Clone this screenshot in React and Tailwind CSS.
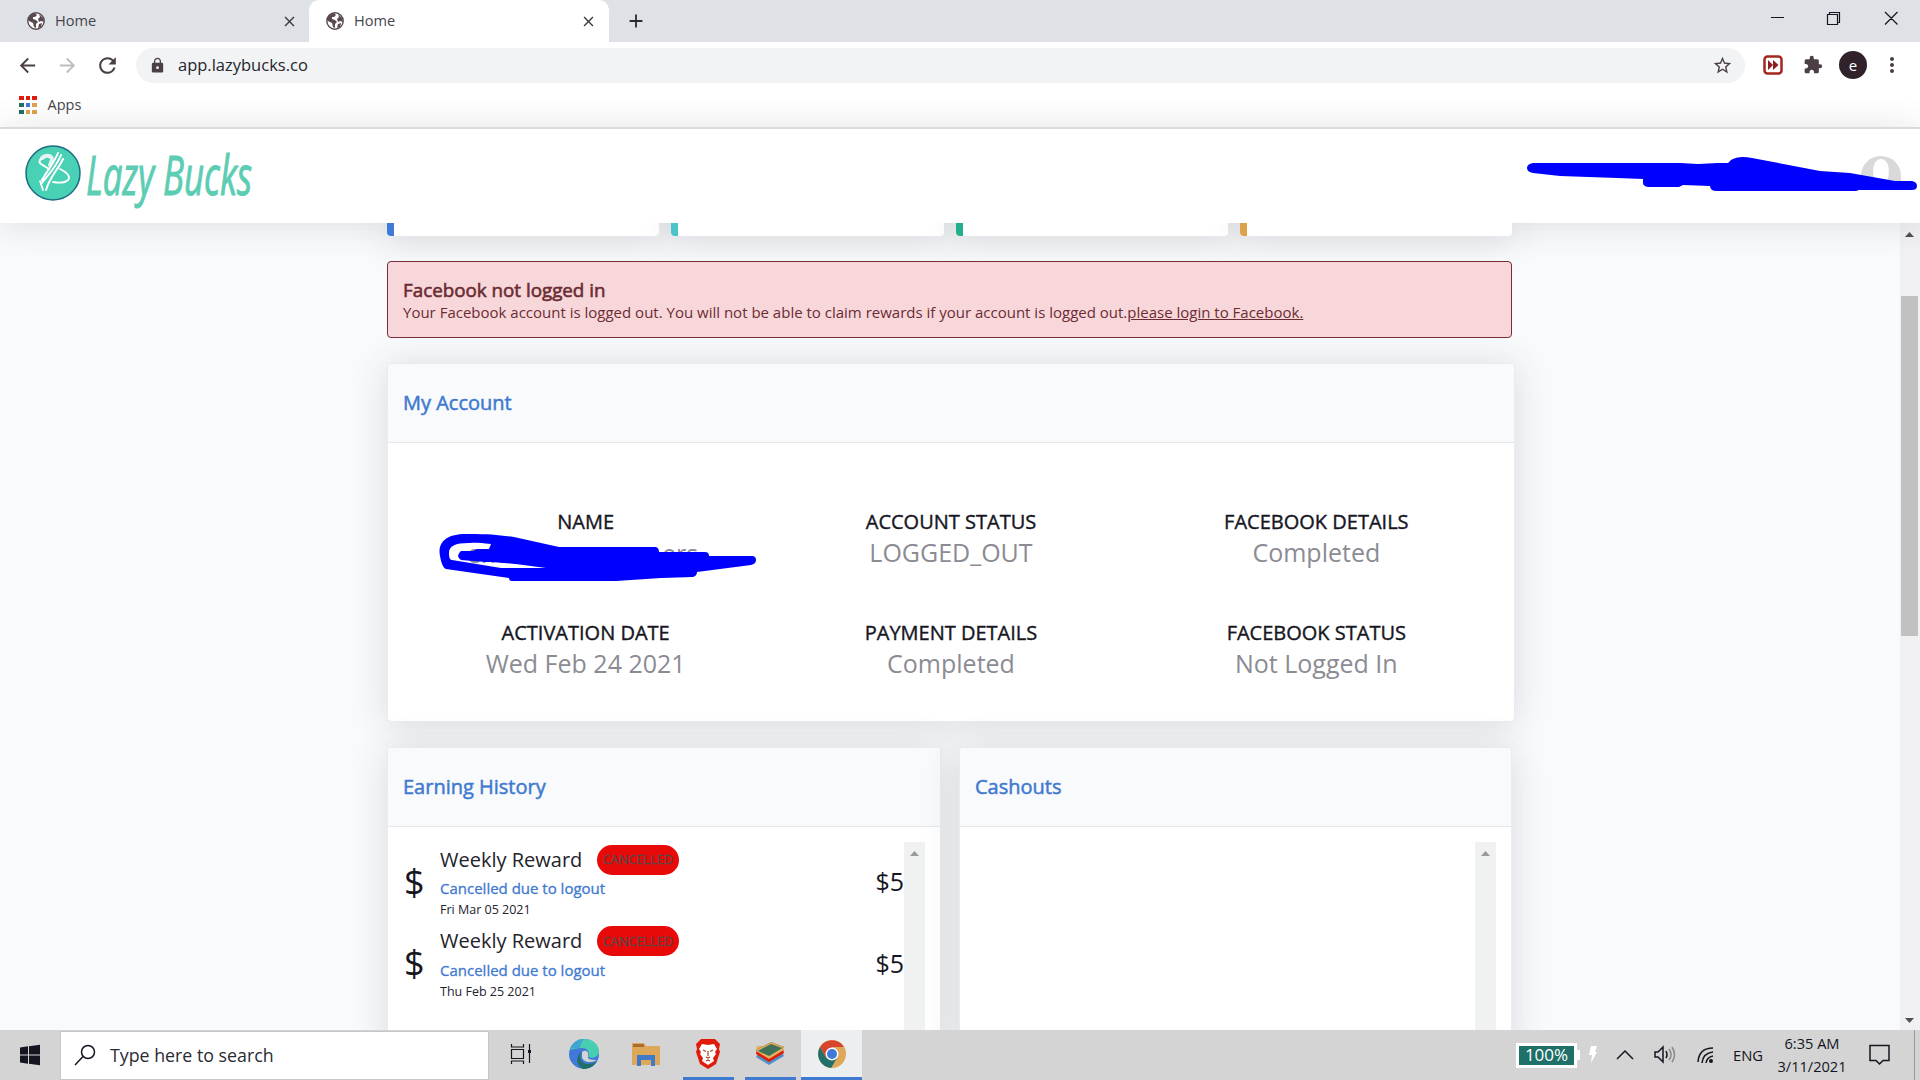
import React from 'react';
import { MdPublic, MdArrowBack, MdArrowForward, MdRefresh, MdLock, MdStarBorder, MdExtension, MdMoreVert, MdClose, MdAdd } from 'react-icons/md';

const stats = ['bg-[#4079d8]', 'bg-[#4ac4c8]', 'bg-[#25ae8c]', 'bg-[#dda24c]'];

const details = [
    { label: 'NAME', value: '' },
    { label: 'ACCOUNT STATUS', value: 'LOGGED_OUT' },
    { label: 'FACEBOOK DETAILS', value: 'Completed' },
    { label: 'ACTIVATION DATE', value: 'Wed Feb 24 2021' },
    { label: 'PAYMENT DETAILS', value: 'Completed' },
    { label: 'FACEBOOK STATUS', value: 'Not Logged In' }
];

const rewards = [
    { title: 'Weekly Reward', note: 'Cancelled due to logout', date: 'Fri Mar 05 2021', amount: '$5' },
    { title: 'Weekly Reward', note: 'Cancelled due to logout', date: 'Thu Feb 25 2021', amount: '$5' }
];

const appsColors = [
    'bg-[#e01b0c]', 'bg-[#e01b0c]', 'bg-[#e01b0c]',
    'bg-[#1e7068]', 'bg-[#4079d8]', 'bg-[#dda24c]',
    'bg-[#1e7068]', 'bg-[#dda24c]', 'bg-[#dda24c]'
];

const Globe = () => (
    <span className="w-[21px] h-[21px] flex items-center justify-center">
        <svg width="18" height="18" viewBox="0 0 18 18">
            <circle cx="9" cy="9" r="8.200" fill="#fff" stroke="#5a4a50" strokeWidth="1.400" />
            <path d="M1 8c0-4 3-7 7-7l2 2-2 2H6v2l3 1 2 2-2 2v4l-2-1-1-4-4-2zM12 2l4 4 1 4-3-1-2 1-1-3 2-2z" fill="#5a4a50" />
            <path d="M12 12l3-1-1 4-3 1z" fill="#5a4a50" />
        </svg>
    </span>
);

const Tab = ({ active }) => (
    <div className={`h-[42px] flex items-center ${active ? 'w-[300px] pl-[15px] pr-[12px] bg-white rounded-t-[10px]' : 'w-[309px] pl-[25px] pr-[11px]'}`}>
        <Globe />
        <span className="ml-[9px] text-[14.6px] text-[#45454d]">Home</span>
        <MdClose size={17} className="ml-auto text-[#3c3c40]" />
    </div>
);

const WindowControls = () => (
    <svg width="160" height="42" viewBox="0 0 160 42" fill="none" stroke="#15151f" strokeWidth="1.2" className="ml-auto">
        <path d="M11 17.500h13M67.500 14.500h10v10h-10zM69.500 14.500v-2h10v10h-2M125 12l12.500 12.500M137.500 12l-12.500 12.500" />
    </svg>
);

const Browser = () => (
    <>
        <div className="h-[42px] bg-[#dee1e6] flex shrink-0">
            <Tab />
            <Tab active />
            <MdAdd size={22} className="ml-4 mt-[10px] text-[#2c2c30]" />
            <WindowControls />
        </div>
        <div className="h-[46px] bg-white flex items-center shrink-0 text-[#4a3f45]">
            <MdArrowBack size={23} className="ml-4" />
            <MdArrowForward size={23} className="ml-[17px] text-[#bdbdbd]" />
            <MdRefresh size={25} className="ml-4" />
            <div className="ml-[16px] w-[1609px] h-[35px] rounded-full bg-[#f1f3f4] flex items-center pl-[13px] pr-[12px]">
                <MdLock size={17} />
                <span className="ml-[12px] text-[16.5px] text-[#26262c]">app.lazybucks.co</span>
                <MdStarBorder size={21} className="ml-auto" />
            </div>
            <svg width="20" height="20" viewBox="0 0 20 20" className="ml-[18px]">
                <rect x="1.500" y="1.500" width="17" height="17" rx="3" fill="#fff" stroke="#a3271f" strokeWidth="2.500" />
                <path d="M5 5l5 5-5 5zM10 5l5.500 5-5.500 5z" fill="#8c1f26" />
            </svg>
            <MdExtension size={20} className="ml-[20px]" />
            <div className="ml-[16px] w-7 h-7 rounded-full bg-[#31212b] text-white text-[15px] flex items-center justify-center">e</div>
            <MdMoreVert size={24} className="ml-[13px]" />
        </div>
        <div className="h-[39px] bg-white flex items-center shrink-0 pl-[19px] pb-[5px]">
            <div className="grid grid-cols-3 gap-x-[2px] gap-y-[2.500px]">
                {appsColors.map((color, i) => (
                    <span key={i} className={`w-[4.5px] h-[4.5px] ${color}`} />
                ))}
            </div>
            <span className="ml-[11px] text-[14.5px] text-[#45454d]">Apps</span>
        </div>
    </>
);

const Logo = () => (
    <svg width="270" height="82" viewBox="0 0 270 82" className="overflow-visible">
        <circle cx="43" cy="37" r="27" fill="#48d1b5" stroke="#1e6c80" strokeWidth="1.500" />
        <g fill="none" stroke="#fff" strokeLinecap="round">
            <path d="M34 22c-4 0-6 4-3 6l8 5" strokeWidth="2" />
            <path d="M32 22c4-4 11-2 10 2l-2 5" strokeWidth="4" stroke="#e6f3f4" />
            <path d="M48 17c-4 10-9 15-16 27M51 19C47 30 39 38 31 48M53 23c-5 11-13 17-17 31" strokeWidth="2" />
            <path d="M50 33c7 3 11 8 8 11-3 3-9 3-15 2M30 45l3 9" strokeWidth="1.800" />
        </g>
        <text x="76" y="59" fontSize="54" fontStyle="italic" fontFamily="Open Sans, sans-serif" fill="#5ccdb3" stroke="#5ccdb3" strokeWidth="1" textLength="166" lengthAdjust="spacingAndGlyphs">Lazy Bucks</text>
    </svg>
);

const Header = () => (
    <header className="h-[96px] bg-white border-t-2 border-[#d8dbdd] flex shrink-0 justify-between relative z-10 shadow-[0_2px_34px_rgba(58,59,69,0.15)]">
        <div className="pl-[10px] pt-[7px]"><Logo /></div>
        <svg width="400" height="94" viewBox="1520 129 400 94">
            <path d="M1861 176a20 20 0 0 1 40 0v6h-40z" fill="#d9d9d9" />
            <path d="M1875 182c-3-10-3-22 6-23 9 1 9 13 6 23z" fill="#fff" />
            <path d="M1533 163h147l18 1 20-1h10l3-3q8-5 21-2l68 13 30 2 45 8h17q5 1 5 5t-5 4h-53l-3 1h-139q-7 0-7-5l-27-1-4 2h-31q-5-1-5-4v-4l-26-1-57-2-27-3q-6-1-6-5t6-5z" fill="#0000ff" />
        </svg>
    </header>
);

const Card = ({ title, className, children }) => (
    <section className={`bg-white rounded border border-[#e9ecef] shadow-[0_2px_36px_rgba(58,59,69,0.16)] flex flex-col ${className}`}>
        <div className="h-[79px] shrink-0 bg-[#f8fafc] border-b border-[#e3e6ea] rounded-t pl-[15px] flex items-center">
            <h6 className="text-[20px] text-[#4079d0] [-webkit-text-stroke:0.5px]">{title}</h6>
        </div>
        {children}
    </section>
);

const InnerScroll = () => (
    <div className="w-[21px] bg-[#f0f1f1] flex justify-center pt-[9px]">
        <svg width="9" height="5" viewBox="0 0 9 5"><path d="M0 5L4.500 0 9 5z" fill="#9a9a9a" /></svg>
    </div>
);

const RedactedName = () => (
    <svg width="320" height="56" viewBox="438 528 320 56" className="absolute left-[34px] top-[24px]">
        <text x="468" y="563" fontSize="25" fill="#8b8b93" fontFamily="Open Sans, sans-serif">em</text>
        <text x="663" y="563" fontSize="25" fill="#8b8b93" fontFamily="Open Sans, sans-serif">ers</text>
        <path fillRule="evenodd" fill="#0000ff" d="M441 556c-3-15 8-23 29-22 20 0 30 1 45 3l45 10h97q3 1 3 5h46q4 0 4 4h43q4 0 4 4t-5 5l-54 7q0 4-4 5l-32 1-45 3h-104q-3 0-3-3l-28-4-35-5q-4-1-6-13zM450 553c0 5 1 7 3 7l49 8h45c-20-2-40-6-61-6l-24-2q-6-4 0-9h12l4-2h12l2-5c-15-2-22-1-22-1-14 0-20 3-20 10z" />
    </svg>
);

const Account = () => (
    <Card title="My Account" className="mt-[25px] h-[359px] w-[1128px]">
        <div className="grid grid-cols-3 mt-[61px] px-[15px] gap-y-[42px]">
            {details.map((d) => (
                <div key={d.label} className="h-[69px] text-center relative">
                    <div className="text-[20px] leading-[36px] text-[#17171f] [-webkit-text-stroke:0.4px]">{d.label}</div>
                    <div className="text-[25px] leading-[24px] text-[#8b8b93]">{d.value}</div>
                    {!d.value && <RedactedName />}
                </div>
            ))}
        </div>
    </Card>
);

const RewardRow = ({ item }) => (
    <div className="h-[81.5px] flex items-center">
        <span className="w-[37px] pl-px text-[36px] leading-none text-[#17171f]">$</span>
        <div>
            <div className="flex items-center h-[31px]">
                <span className="w-[157px] text-[20px] text-[#23232b]">{item.title}</span>
                <span className="w-[82px] h-[30px] rounded-full bg-[#e80909] text-[#5d4646] text-[12.8px] [-webkit-text-stroke:0.3px] flex items-center justify-center">CANCELLED</span>
            </div>
            <div className="text-[15px] leading-[26px] text-[#4079d0] [-webkit-text-stroke:0.3px]">{item.note}</div>
            <div className="text-[12.5px] leading-[18px] text-[#23232b]">{item.date}</div>
        </div>
        <span className="ml-auto text-[25px] text-[#17171f]">{item.amount}</span>
    </div>
);

const Page = () => (
    <main className="flex-1 min-h-0 overflow-hidden flex bg-[#f8fafc]">
        <div className="flex-1 pl-[387px]">
            <div className="flex gap-[12px] relative z-20">
                {stats.map((accent) => (
                    <div key={accent} className="w-[272.3px] h-[13px] bg-white rounded-b overflow-hidden shadow-[0_2px_34px_rgba(58,59,69,0.25)]">
                        <div className={`w-[7px] h-full ${accent}`} />
                    </div>
                ))}
            </div>
            <div className="mt-[25px] w-[1125px] h-[77px] rounded border border-[#7b2a38] bg-[#f8d7da] text-[#6b2c33] pl-[15px] pt-[16px] relative z-20">
                <div className="text-[18.8px] leading-[24px] [-webkit-text-stroke:0.6px]">Facebook not logged in</div>
                <div className="text-[15px] leading-[21px] whitespace-nowrap">
                    Your Facebook account is logged out. You will not be able to claim rewards if your account is logged out.<a className="underline">please login to Facebook.</a>
                </div>
            </div>
            <Account />
            <div className="mt-[25px] flex gap-[18px]">
                <Card title="Earning History" className="w-[554px] h-[310px]">
                    <div className="flex flex-1 px-[15px] pt-[15px]">
                        <div className="flex-1 -mt-px">
                            {rewards.map((r) => <RewardRow key={r.date} item={r} />)}
                        </div>
                        <InnerScroll />
                    </div>
                </Card>
                <Card title="Cashouts" className="w-[553px] h-[310px]">
                    <div className="flex flex-1 justify-end pr-[15px] pt-[15px]">
                        <InnerScroll />
                    </div>
                </Card>
            </div>
        </div>
        <div className="w-[20px] bg-[#f1f1f3] flex flex-col items-center pt-[9px] pb-[7px] pr-px">
            <svg width="9" height="5" viewBox="0 0 9 5"><path d="M0 5L4.500 0 9 5z" fill="#505050" /></svg>
            <div className="w-[17px] h-[340px] bg-[#c1c1c1] mt-[59px]" />
            <svg width="9" height="5" viewBox="0 0 9 5" className="mt-auto"><path d="M0 0L4.500 5 9 0z" fill="#505050" /></svg>
        </div>
    </main>
);

const TaskItem = ({ className = '', line, children }) => (
    <div className={`h-[50px] flex flex-col items-center ${className}`}>
        <div className="flex-1 flex items-center">{children}</div>
        <div className={`h-[3px] ${line || ''}`} />
    </div>
);

const Taskbar = () => (
    <footer className="h-[50px] shrink-0 bg-[#d4d4d4] flex items-center text-[#15151f] relative z-30">
        <svg width="60" height="50" viewBox="0 0 60 50" fill="#15151f">
            <path d="M20 17.500l8-1.200v8.200h-8zM29 16.200l11-1.500v9.800h-11zM20 25.500h8v8.200l-8-1.200zM29 25.500h11v9.800l-11-1.500z" />
        </svg>
        <div className="w-[429px] h-[49px] bg-white border border-[#c6c6c6] flex items-center pl-[13px]">
            <svg width="22" height="22" viewBox="0 0 22 22" fill="none" stroke="#15151f" strokeWidth="1.500">
                <circle cx="14" cy="8" r="6.500" /><path d="M9 12.500L1 21" />
            </svg>
            <span className="ml-[14px] text-[17.8px] text-[#2b2b33]">Type here to search</span>
        </div>
        <TaskItem className="w-[64px]">
            <svg width="22" height="22" viewBox="0 0 22 22" fill="none" stroke="#15151f" strokeWidth="1.200">
                <path d="M1.500 1v3h12V1M1.500 6.500h12v9h-12zM1.500 21v-3h12v3M19.500 1v19" /><path d="M18 7h3v3h-3z" fill="#15151f" stroke="none" />
            </svg>
        </TaskItem>
        <TaskItem className="w-[62px]">
            <svg width="30" height="30" viewBox="0 0 30 30">
                <circle cx="15" cy="15" r="15" fill="#4079d8" />
                <path d="M1 11C4 3 9 0 16 0c8 0 14 6 14 12 0 6-6 8-11 6 2-4 0-9-6-9-4 0-9 1-12 2z" fill="#48cdb0" />
                <path d="M1 10C4 3 9 0 15 0c-3 4-4 6-4 9-4 0-8 0-10 1z" fill="#3fa6cf" />
                <path d="M13 12c-4 6-1 12 5 13 4 0 8-1 10-3-3 6-9 8-14 8-7-4-8-12-1-18z" fill="#1e7068" />
                <path d="M13 13c4-3 7 0 6 4-1 3 2 4 9 4-5 3-14 3-15-3z" fill="#d4d4d4" />
            </svg>
        </TaskItem>
        <TaskItem className="w-[62px]">
            <svg width="28" height="24" viewBox="0 0 28 24">
                <path d="M0 1h12l2 3h14v19H0z" fill="#dda85a" /><path d="M1 2h11v3H1z" fill="#aa6a30" />
                <path d="M5 13h18v11h-4v-6H9v6H5z" fill="#4079c8" />
            </svg>
        </TaskItem>
        <TaskItem className="w-[62px]" line="w-[51px] bg-[#4079d0]">
            <svg width="26" height="30" viewBox="0 0 26 30">
                <path d="M6 0h14l5 5-1 5 1 3-4 12-8 5-8-5L1 13l1-3-1-5z" fill="#e01b0c" />
                <path d="M7 5l6 1 6-1 3 5-2 3 1 2-3 4 1 3-6 4-6-4 1-3-3-4 1-2-2-3z" fill="#fff" />
                <path d="M8 11l3 1.500M18 11l-3 1.500M13 12v5M11 18l2 1 2-1M11 22l2-1 2 1" fill="none" stroke="#b0402c" strokeWidth="1.200" />
            </svg>
        </TaskItem>
        <TaskItem className="w-[62px]" line="w-[51px] bg-[#4079d0]">
            <svg width="28" height="24" viewBox="0 0 28 24">
                <path d="M0 15l13 8 15-9-2-4-24 2z" fill="#4f91c8" />
                <path d="M0 12l13 8 15-9-1-4H1z" fill="#e01b0c" />
                <path d="M0 9l13 8 15-9-1-4H1z" fill="#ddb060" />
                <path d="M0 8L15 0l13 5-15 9z" fill="#3f7058" /><path d="M0 8L15 0l13 5-2 1-11-4L2 9z" fill="#dda85a" />
            </svg>
        </TaskItem>
        <TaskItem className="w-[61px] bg-[#eceff1]" line="w-[61px] bg-[#4079d0]">
            <svg width="28" height="28" viewBox="0 0 28 28">
                <circle cx="14" cy="14" r="14" fill="#dda85a" />
                <path d="M2 7a14 14 0 0 1 24 0H14L8 18z" fill="#d8452e" />
                <path d="M2 7a14 14 0 0 0 11 21l6-10-11 0z" fill="#1e7068" />
                <circle cx="14" cy="14" r="6.500" fill="#fff" /><circle cx="14" cy="14" r="5" fill="#4079d8" />
            </svg>
        </TaskItem>
        <div className="ml-auto w-[61px] h-[25px] border-[3px] border-white bg-[#1e7068] text-white text-[17px] flex items-center justify-center">100%</div>
        <svg width="30" height="50" viewBox="0 0 30 50" fill="#fff"><path d="M0 20h3v10H0zM14 16h6l-2 6h2l-6 11 1-8h-3z" /></svg>
        <svg width="130" height="50" viewBox="1607 0 130 50" fill="none" stroke="#15151f" strokeWidth="1.500">
            <path d="M1617 29l8-8 8 8M1655 22h3l5-5v15l-5-5h-3zM1666 21q2 4 0 7" />
            <path d="M1669 19q4 6 0 11M1672 17q5 8 0 15" stroke="#8a8a8a" />
            <path d="M1698 32q1-14 15-14M1702 33q1-10 11-11M1706 33q1-6 7-7" /><circle cx="1711" cy="31" r="2" fill="#15151f" stroke="none" />
        </svg>
        <span className="w-[28px] -ml-[4px] text-[14.8px]">ENG</span>
        <div className="w-[82px] ml-[10px] pb-px text-[14.6px] leading-[23px] text-center">
            <div>6:35 AM</div>
            <div>3/11/2021</div>
        </div>
        <svg width="67" height="50" viewBox="1853 0 67 50" fill="none" stroke="#15151f" strokeWidth="1.500">
            <path d="M1870 15.500h19v15h-6l-3.500 3.500-3.500-3.500h-6z" /><path d="M1914.500 0v50" stroke="#999" strokeWidth="1" />
        </svg>
    </footer>
);

const App = () => (
    <div className="w-[1920px] h-[1080px] flex flex-col overflow-hidden bg-white font-['Open_Sans',sans-serif]">
        <Browser />
        <Header />
        <Page />
        <Taskbar />
    </div>
);

export default App;
